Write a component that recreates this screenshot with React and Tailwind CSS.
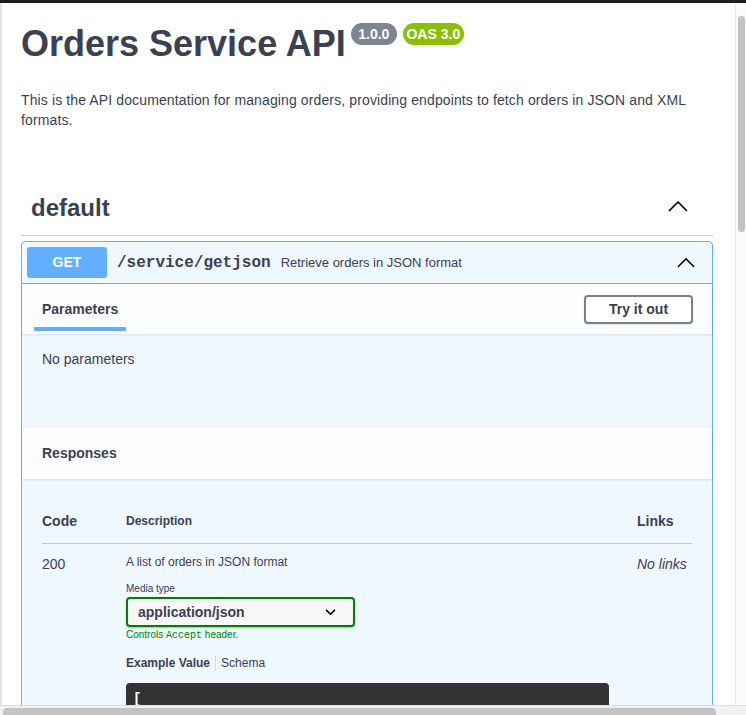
import React from "react";

const ChevronUp = ({ className }) => (
  <svg viewBox="0 0 20 12" className={className} fill="none">
    <polyline
      points="1.5,10.5 10,2 18.5,10.5"
      stroke="#000"
      strokeWidth="1.7"
      strokeLinecap="round"
      strokeLinejoin="round"
    />
  </svg>
);

const ChevronDown = () => (
  <svg viewBox="0 0 12 8" className="w-[11px] h-[7px]" fill="none">
    <polyline
      points="1.5,1.5 6,6 10.5,1.5"
      stroke="#000"
      strokeWidth="2"
      strokeLinecap="round"
      strokeLinejoin="round"
    />
  </svg>
);

const App = () => {
  return (
    <div className="w-[746px] h-[715px] overflow-hidden flex flex-col bg-white text-[#3b4151] font-['Liberation_Sans',Arial,sans-serif]">
      {/* window top edge */}
      <div className="h-[3px] bg-[#1c1c1c] shrink-0" />

      <div className="flex flex-1 min-h-0">
        <div className="w-[2px] bg-[#e4e4e4] shrink-0" />

        <div className="flex-1 min-w-0 overflow-hidden pl-[19px] pr-[22px]">
          {/* Title */}
          <div className="flex items-start mt-[21px]">
            <h2 className="text-[36px] leading-[40px] font-bold">
              Orders Service API
            </h2>
            <div className="flex gap-[6px] ml-[5px] -mt-[1px]">
              <span className="w-[46px] h-[22px] rounded-full bg-[#7d8492] text-white text-[14px] font-bold leading-[22px] text-center">
                1.0.0
              </span>
              <span className="w-[61px] h-[22px] rounded-full bg-[#89bf04] text-white text-[14px] font-bold leading-[22px] text-center">
                OAS 3.0
              </span>
            </div>
          </div>

          <p className="mt-[26px] text-[14px] leading-[20px] tracking-[0.12px]">
            This is the API documentation for managing orders, providing
            endpoints to fetch orders in JSON and XML formats.
          </p>

          {/* Tag */}
          <div className="mt-[50px] h-[56px] flex items-center justify-between pl-[10px] border-b border-[#cfd1d5]">
            <h3 className="text-[24px] font-bold">default</h3>
            <ChevronUp className="w-[20px] h-[12px] mr-[25px] -mt-[3px]" />
          </div>

          {/* Operation */}
          <div className="mt-[5px] border border-[#61affe] rounded-[4px] bg-[#eff7ff]">
            <div className="h-[42px] flex items-center px-[5px] border-b border-[#61affe]">
              <div className="w-[80px] h-[31px] rounded-[3px] bg-[#61affe] text-white text-[14px] font-bold flex items-center justify-center">
                GET
              </div>
              <span className="ml-[10px] font-['Liberation_Mono',monospace] text-[16px] font-bold">
                /service/getjson
              </span>
              <span className="ml-[10px] text-[13px]">
                Retrieve orders in JSON format
              </span>
              <ChevronUp className="w-[18px] h-[11px] ml-auto mr-[12px]" />
            </div>

            {/* Parameters header */}
            <div className="h-[50px] flex items-center justify-between pl-[12px] pr-[19px] bg-[#fcfdff] shadow-[0_1px_2px_rgba(0,0,0,0.1)]">
              <div className="self-end flex flex-col">
                <span className="px-[8px] text-[14px] leading-[20px] font-bold">
                  Parameters
                </span>
                <div className="h-[4px] mt-[8px] mb-[3px] bg-[#61affe]" />
              </div>
              <button className="w-[109px] h-[29px] border-2 border-[#808080] rounded-[4px] bg-white text-[14px] font-bold shadow-[0_1px_2px_rgba(0,0,0,0.1)]">
                Try it out
              </button>
            </div>

            <div className="h-[94px] px-[20px] pt-[15px]">
              <p className="text-[14px] leading-[20px]">No parameters</p>
            </div>

            {/* Responses header */}
            <div className="h-[51px] flex items-center px-[20px] bg-[#fcfdff] shadow-[0_1px_2px_rgba(0,0,0,0.1)]">
              <h4 className="text-[14px] font-bold">Responses</h4>
            </div>

            <div className="px-[20px] pt-[32px]">
              <div className="flex pb-[12px] border-b border-[#c4c6cb] text-[14px] leading-[20px] font-bold">
                <div className="w-[84px]">Code</div>
                <div className="flex-1 text-[12px]">Description</div>
                <div className="w-[55px]">Links</div>
              </div>

              <div className="flex">
                <div className="w-[84px] pt-[10px] text-[14px] leading-[20px]">
                  200
                </div>
                <div className="flex-1 pt-[10px]">
                  <p className="text-[12px] leading-[16px]">
                    A list of orders in JSON format
                  </p>
                  <p className="mt-[13px] text-[10px] leading-[12px]">
                    Media type
                  </p>
                  <div className="mt-[2px] w-[229px] h-[30px] border-2 border-[#008000] rounded-[4px] bg-[#f7f7f7] shadow-[0_1px_2px_rgba(0,0,0,0.25)] flex items-center justify-between pl-[10px] pr-[17px]">
                    <span className="text-[14px] font-bold">
                      application/json
                    </span>
                    <ChevronDown />
                  </div>
                  <p className="mt-[2px] text-[10px] leading-[12px] text-[#008000]">
                    Controls{" "}
                    <code className="font-['Liberation_Mono',monospace]">
                      Accept
                    </code>{" "}
                    header.
                  </p>
                  <div className="mt-[13px] flex items-center text-[12px] leading-[16px]">
                    <span className="font-bold">Example Value</span>
                    <span className="mx-[5px] w-px h-[16px] bg-[#d9dadd]" />
                    <span>Schema</span>
                  </div>
                  <div className="mt-[12px] w-[483px] h-[60px] rounded-[4px] bg-[#333333] px-[7px] pt-[3px]">
                    <span className="font-['Liberation_Mono',monospace] text-[14px] leading-[18px] font-bold text-white">
                      [
                    </span>
                  </div>
                </div>
                <div className="w-[55px] pt-[10px] text-[14px] leading-[20px] italic">
                  No links
                </div>
              </div>
            </div>
          </div>
        </div>

        {/* vertical scrollbar */}
        <div className="w-[11px] shrink-0 bg-[#fafafa] border-l border-[#e6e6e6] pt-[13px] pl-[2px] pr-[1px]">
          <div className="h-[216px] rounded-full bg-[#c1c1c1]" />
        </div>
      </div>

      {/* horizontal scrollbar */}
      <div className="h-[10px] shrink-0 bg-[#f1f1f1] border-t border-[#dedede] pl-[3px] pt-[2px]">
        <div className="w-[713px] h-[8px] rounded-t-[4px] bg-[#c4c4c4]" />
      </div>
    </div>
  );
};

export default App;
